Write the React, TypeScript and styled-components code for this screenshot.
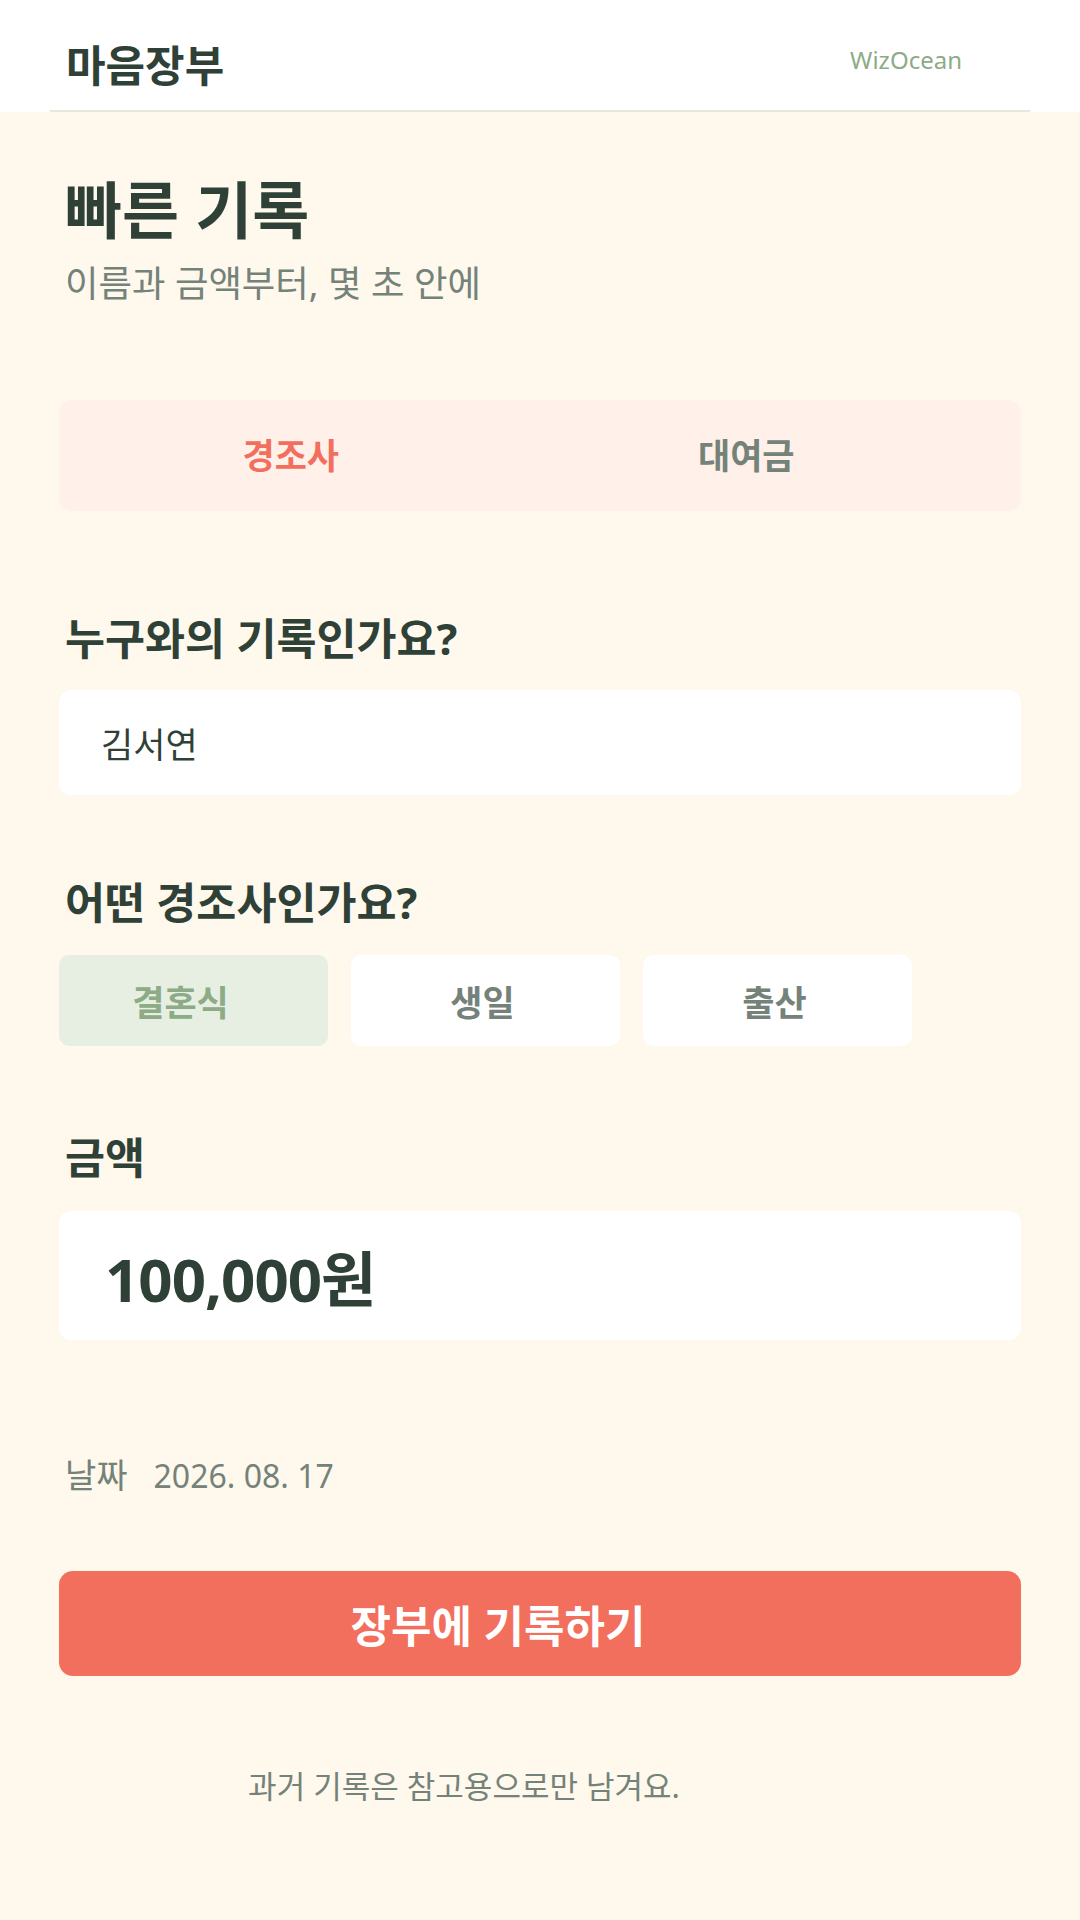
import styled, { createGlobalStyle } from "styled-components";

const color = {
  cream: "#fef8ed",
  white: "#ffffff",
  line: "#e9e6dd",
  dark: "#2f4137",
  gray: "#748279",
  coral: "#f26e5d",
  coralSoft: "#fff0e9",
  green: "#8dab86",
  greenSoft: "#e6efe1",
};

const GlobalStyle = createGlobalStyle`
  * {
    box-sizing: border-box;
  }

  body {
    margin: 0;
    background-color: ${color.cream};
    font-family: "Noto Sans", "Noto Sans CJK KR", sans-serif;
    color: ${color.dark};
  }
`;

const tabs = ["경조사", "대여금"];
const events = ["결혼식", "생일", "출산"];

const App = () => {
  return (
    <>
      <GlobalStyle />
      <Header>
        <HeaderInner>
          <Logo>마음장부</Logo>
          <Brand>WizOcean</Brand>
        </HeaderInner>
      </Header>
      <Main>
        <Title>빠른 기록</Title>
        <Subtitle>이름과 금액부터, 몇 초 안에</Subtitle>

        <TabBar>
          {tabs.map((tab, i) => (
            <Tab key={tab} $active={i === 0}>
              {tab}
            </Tab>
          ))}
        </TabBar>

        <Field $top={101}>
          <Label>누구와의 기록인가요?</Label>
          <NameBox>김서연</NameBox>
        </Field>

        <Field $top={81}>
          <Label>어떤 경조사인가요?</Label>
          <ChipRow>
            {events.map((ev, i) => (
              <Chip key={ev} $active={i === 0}>
                {ev}
              </Chip>
            ))}
          </ChipRow>
        </Field>

        <Field $top={85}>
          <Label>금액</Label>
          <AmountBox>100,000원</AmountBox>
        </Field>

        <DateRow>
          <DateLabel>날짜</DateLabel>
          <span>2026. 08. 17</span>
        </DateRow>

        <SubmitButton>장부에 기록하기</SubmitButton>

        <Footnote>과거 기록은 참고용으로만 남겨요.</Footnote>
      </Main>
    </>
  );
};

const Header = styled.header`
  width: 100%;
  background-color: ${color.white};
`;

const HeaderInner = styled.div`
  margin: 0 50px;
  height: 112px;
  padding: 22px 68px 0 16px;
  display: flex;
  align-items: center;
  justify-content: space-between;
  border-bottom: 2px solid ${color.line};
`;

const Logo = styled.h1`
  margin: 0;
  font-size: 43px;
  font-weight: 700;
  line-height: 56px;
  color: ${color.dark};
`;

const Brand = styled.span`
  font-size: 24px;
  line-height: 32px;
  margin-bottom: 12px;
  color: ${color.green};
`;

const Main = styled.main`
  padding: 0 59px 120px;
  display: flex;
  flex-direction: column;
`;

const Title = styled.h2`
  margin: 61px 0 0 6px;
  font-size: 62px;
  font-weight: 700;
  line-height: 74px;
  color: ${color.dark};
`;

const Subtitle = styled.p`
  margin: 14px 0 0 6px;
  font-size: 36.4px;
  line-height: 44px;
  color: ${color.gray};
`;

const TabBar = styled.div`
  margin-top: 95px;
  height: 111px;
  padding: 0 47px 0 4px;
  display: grid;
  grid-template-columns: 1fr 1fr;
  align-items: center;
  background-color: ${color.coralSoft};
  border-radius: 14px;
`;

const Tab = styled.button<{ $active: boolean }>`
  border: none;
  background: none;
  font-family: inherit;
  font-size: 35px;
  font-weight: 700;
  line-height: 44px;
  color: ${({ $active }) => ($active ? color.coral : color.gray)};
`;

const Field = styled.section<{ $top: number }>`
  margin-top: ${({ $top }) => $top}px;
  display: flex;
  flex-direction: column;
  gap: 26px;
`;

const Label = styled.h3`
  margin: 0 0 0 6px;
  font-size: 43.5px;
  font-weight: 700;
  line-height: 52px;
  color: ${color.dark};
`;

const NameBox = styled.div`
  height: 105px;
  padding: 0 42px;
  display: flex;
  align-items: center;
  background-color: ${color.white};
  border-radius: 12px;
  font-size: 35px;
  color: ${color.dark};
`;

const ChipRow = styled.div`
  display: flex;
  gap: 23px;
  margin-top: 1px;
`;

const Chip = styled.button<{ $active: boolean }>`
  width: 269px;
  height: 91px;
  padding: 0 ${({ $active }) => ($active ? "26px" : "6px")} 0 0;
  border: none;
  border-radius: 10px;
  font-family: inherit;
  font-size: 35px;
  font-weight: 700;
  background-color: ${({ $active }) => ($active ? color.greenSoft : color.white)};
  color: ${({ $active }) => ($active ? color.green : color.gray)};
`;

const AmountBox = styled.div`
  height: 129px;
  margin-top: 2px;
  padding: 0 46px;
  display: flex;
  align-items: center;
  background-color: ${color.white};
  border-radius: 12px;
  font-size: 60px;
  font-weight: 700;
  letter-spacing: -1px;
  color: ${color.dark};
`;

const DateRow = styled.div`
  margin: 115px 0 0 6px;
  display: flex;
  align-items: baseline;
  gap: 26px;
  font-size: 32px;
  line-height: 40px;
  color: ${color.gray};
`;

const DateLabel = styled.span`
  font-size: 34px;
`;

const SubmitButton = styled.button`
  margin-top: 75px;
  height: 105px;
  padding: 0 84px 0 0;
  border: none;
  border-radius: 14px;
  background-color: ${color.coral};
  font-family: inherit;
  font-size: 44px;
  font-weight: 700;
  color: ${color.white};
`;

const Footnote = styled.p`
  margin: 90px 0 0;
  padding-right: 152px;
  text-align: center;
  font-size: 31px;
  line-height: 40px;
  color: ${color.gray};
`;

export default App;
